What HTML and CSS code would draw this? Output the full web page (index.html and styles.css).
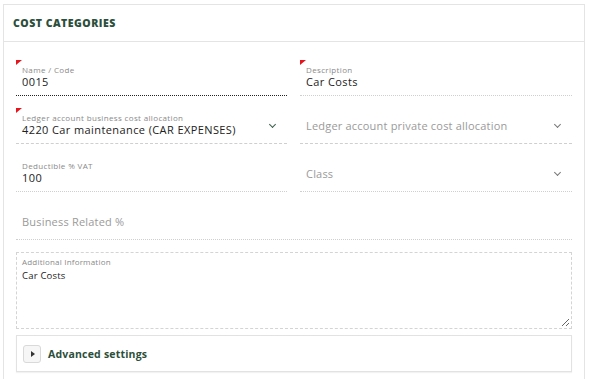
FILE: index.html
```html
<!DOCTYPE html>
<html lang="en">
<head>
    <meta charset="UTF-8">
    <meta name="viewport" content="width=device-width, initial-scale=1.0">
    <title>Cost Categories</title>
    <link rel="stylesheet" href="styles.css">
</head>
<body>
    <div class="panel">
        <div class="panel-header">
            <h2>COST CATEGORIES</h2>
        </div>

        <div class="panel-body">
            <div class="grid">
                <div class="field required focused">
                    <label>Name / Code</label>
                    <div class="value">0015</div>
                </div>
                <div class="field required">
                    <label>Description</label>
                    <div class="value">Car Costs</div>
                </div>

                <div class="field select required">
                    <label>Ledger account business cost allocation</label>
                    <div class="value">4220 Car maintenance (CAR EXPENSES)</div>
                    <span class="chevron"></span>
                </div>
                <div class="field select empty">
                    <div class="placeholder">Ledger account private cost allocation</div>
                    <span class="chevron"></span>
                </div>

                <div class="field">
                    <label>Deductible % VAT</label>
                    <div class="value">100</div>
                </div>
                <div class="field empty dotted">
                    <div class="placeholder">Class</div>
                    <span class="chevron"></span>
                </div>

                <div class="field empty wide">
                    <div class="placeholder">Business Related %</div>
                </div>
            </div>

            <div class="textarea-box">
                <label>Additional Information</label>
                <textarea>Car Costs</textarea>
            </div>

            <div class="advanced">
                <button class="toggle"><span class="arrow"></span></button>
                <span class="advanced-title">Advanced settings</span>
            </div>
        </div>
    </div>
</body>
</html>
```

FILE: styles.css
```css
body {
    margin: 0;
    padding: 4px 5px 0 3px;
    font-family: 'Open Sans', 'Liberation Sans', sans-serif;
    color: #222;
    background-color: #fff;
}
.panel {
    border: 1px solid #e4e4e4;
    border-bottom: none;
    min-height: 380px;
}
.panel-header {
    height: 36px;
    border-bottom: 1px solid #e4e4e4;
    display: flex;
    align-items: center;
    padding-left: 9px;
}
.panel-header h2 {
    margin: 0;
    font-size: 10.5px;
    font-weight: 800;
    letter-spacing: 0.5px;
    color: #2c4f3c;
}
.panel-body {
    padding: 18px 12px 0 12px;
}
.grid {
    display: grid;
    grid-template-columns: 271px 272px;
    column-gap: 13px;
    row-gap: 12px;
}
.field {
    position: relative;
    padding: 5px 6px 0 6px;
    box-sizing: content-box;
    border-bottom: 1px dotted #cfcfcf;
    height: 30px;
}
.field.focused {
    border-bottom-color: #222;
}
.field.select {
    border-bottom: 1px dashed #cfcfcf;
}
.field.wide {
    grid-column: 1 / 3;
}
.field.required::before {
    content: "";
    position: absolute;
    left: 0;
    top: 0;
    border-top: 5px solid #e8141b;
    border-right: 6px solid transparent;
}
.field label,
.textarea-box label {
    display: block;
    font-size: 8px;
    line-height: 10px;
    letter-spacing: 0.35px;
    color: #8a8a8a;
}
.field .value {
    font-size: 11px;
    line-height: 14px;
    letter-spacing: 0.4px;
    color: #222;
}
.field.empty {
    display: flex;
    align-items: center;
    padding-top: 0;
    height: 35px;
}
.placeholder {
    font-size: 11px;
    letter-spacing: 0.2px;
    color: #9a9a9a;
    margin-top: -1px;
}
.chevron {
    position: absolute;
    right: 12px;
    top: 50%;
    width: 4px;
    height: 4px;
    margin-top: -4px;
    border-right: 1px solid #3b5f4b;
    border-bottom: 1px solid #3b5f4b;
    transform: rotate(45deg);
}
.field.empty .chevron {
    border-color: #777;
}
.textarea-box {
    margin-top: 12px;
    border: 1px dashed #d4d4d4;
    padding: 4px 0 0 5px;
    display: flex;
    flex-direction: column;
    box-sizing: border-box;
    height: 77px;
}
.textarea-box label {
    letter-spacing: 0.2px;
}
.textarea-box textarea {
    flex: 1;
    border: none;
    outline: none;
    padding: 2px 0 0 0;
    margin: 0 1px 1px 0;
    font-family: inherit;
    font-size: 9.5px;
    letter-spacing: 0.2px;
    color: #222;
}
.advanced {
    margin-top: 6px;
    height: 37px;
    border: 1px solid #e2e2e2;
    box-shadow: 0 1px 1px rgba(0, 0, 0, 0.05);
    box-sizing: border-box;
    display: flex;
    align-items: center;
    padding-left: 6px;
    gap: 7px;
}
.toggle {
    width: 18px;
    height: 18px;
    padding: 0;
    border: 1px solid #d9d9d9;
    border-radius: 3px;
    background-color: #f6f6f6;
    display: flex;
    align-items: center;
    justify-content: center;
}
.arrow {
    width: 0;
    height: 0;
    border-left: 4px solid #333;
    border-top: 3px solid transparent;
    border-bottom: 3px solid transparent;
    margin-left: 1px;
}
.advanced-title {
    font-size: 10.5px;
    font-weight: 700;
    letter-spacing: 0.2px;
    color: #2c4f3c;
}
```
